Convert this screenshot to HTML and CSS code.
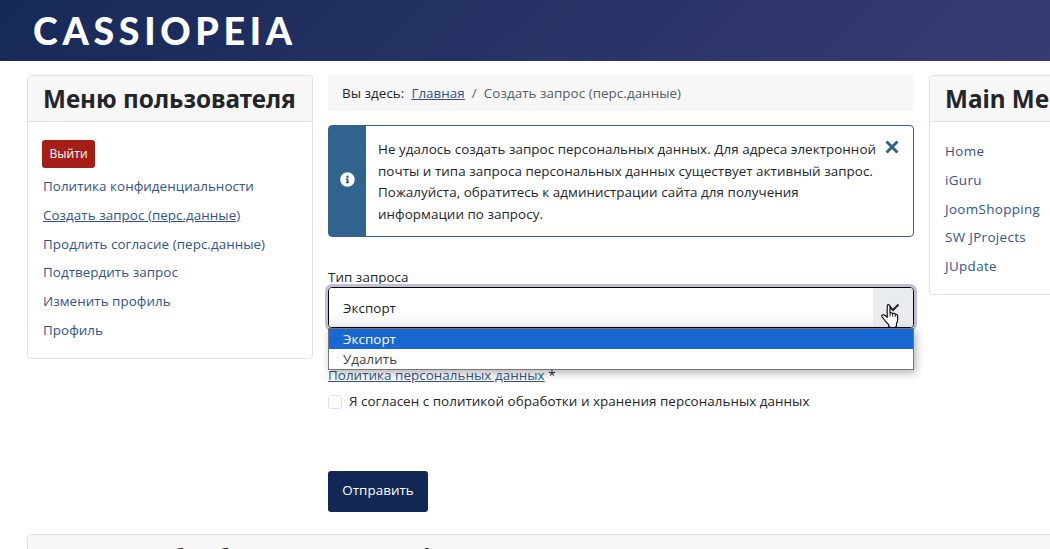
FILE: index.html
```html
<!DOCTYPE html>
<html lang="ru">
<head>
    <meta charset="UTF-8">
    <meta name="viewport" content="width=device-width, initial-scale=1.0">
    <title>Создать запрос (перс.данные)</title>
    <link rel="stylesheet" href="styles.css">
</head>
<body>
    <header class="header">
        <a class="brand" href="#">CASSIOPEIA</a>
    </header>

    <div class="site-grid">
        <aside class="card sidebar-left">
            <h3 class="card-header">Меню пользователя</h3>
            <div class="card-body">
                <button class="btn btn-danger" type="button">Выйти</button>
                <ul class="menu">
                    <li><a href="#">Политика конфиденциальности</a></li>
                    <li class="current"><a href="#">Создать запрос (перс.данные)</a></li>
                    <li><a href="#">Продлить согласие (перс.данные)</a></li>
                    <li><a href="#">Подтвердить запрос</a></li>
                    <li><a href="#">Изменить профиль</a></li>
                    <li><a href="#">Профиль</a></li>
                </ul>
            </div>
        </aside>

        <main class="component">
            <nav class="breadcrumb">
                <span>Вы здесь:</span>
                <a href="#">Главная</a>
                <span class="divider">/</span>
                <span class="active">Создать запрос (перс.данные)</span>
            </nav>

            <div class="alert">
                <div class="alert-icon">
                    <svg width="15" height="15" viewBox="0 0 512 512"><path fill="#fff" d="M256 8C119 8 8 119 8 256s111 248 248 248 248-111 248-248S393 8 256 8zm0 110a42 42 0 1 1 0 84 42 42 0 1 1 0-84zm56 254c0 7-5 12-12 12h-88c-7 0-12-5-12-12v-24c0-7 5-12 12-12h12v-64h-12c-7 0-12-5-12-12v-24c0-7 5-12 12-12h64c7 0 12 5 12 12v100h12c7 0 12 5 12 12z"/></svg>
                </div>
                <div class="alert-text">
                    Не удалось создать запрос персональных данных. Для адреса электронной<br>
                    почты и типа запроса персональных данных существует активный запрос.<br>
                    Пожалуйста, обратитесь к администрации сайта для получения<br>
                    информации по запросу.
                </div>
                <button class="alert-close" type="button" aria-label="Закрыть">
                    <svg width="14" height="14" viewBox="0 0 14 14"><path d="M1.500 1.500l11 11M12.500 1.500l-11 11" stroke="#30638d" stroke-width="3"/></svg>
                </button>
            </div>

            <form class="request-form">
                <label class="form-label">Тип запроса</label>
                <div class="select">
                    <span class="select-value">Экспорт</span>
                    <span class="select-toggle">
                        <svg width="14" height="9" viewBox="0 0 14 9"><path d="M1.500 1.500L7 7l5.500-5.500" fill="none" stroke="#212529" stroke-width="2"/></svg>
                        <svg class="pointer" width="19" height="25" viewBox="0 0 19 25"><path d="M6.200 2.500c0-1 .6-1.700 1.400-1.700s1.400.7 1.400 1.700v6.800c.2-.8 2.400-.9 2.700.5.4-.8 2.400-.7 2.600.7.7-.5 2.400-.2 2.400 1.500v3.600c0 2-.6 3.100-1.300 4.200v2.600c-1.200 1.500-6 1.600-7.700 0v-1.700C6 19 4.300 17.500 3.200 15.500L1 12.800c-.7-1 .2-2.200 1.500-2 1.500.2 2.600 1.300 3.700 2.500z" fill="#fff" stroke="#000" stroke-width="1.100" stroke-linejoin="round"/><path d="M9 9.500v3M11.700 10v2.800M14.300 10.800v2" stroke="#000" stroke-width=".9"/></svg>
                    </span>
                    <ul class="options">
                        <li class="selected">Экспорт</li>
                        <li>Удалить</li>
                    </ul>
                </div>
                <p class="policy"><a href="#">Политика персональных данных</a> *</p>
                <label class="consent">
                    <span class="checkbox"></span>
                    <span>Я согласен с политикой обработки и хранения персональных данных</span>
                </label>
                <button class="btn btn-primary" type="button">Отправить</button>
            </form>
        </main>

        <aside class="card sidebar-right">
            <h3 class="card-header">Main Menu</h3>
            <div class="card-body">
                <ul class="menu">
                    <li><a href="#">Home</a></li>
                    <li><a href="#">iGuru</a></li>
                    <li><a href="#">JoomShopping</a></li>
                    <li><a href="#">SW JProjects</a></li>
                    <li><a href="#">JUpdate</a></li>
                </ul>
            </div>
        </aside>

        <section class="card bottom">
            <h3 class="card-header">Система обработки запросов форума</h3>
        </section>
    </div>
</body>
</html>
```
FILE: styles.css
```css
* {
    box-sizing: border-box;
}

html,
body {
    height: 100%;
    overflow: hidden;
}

body {
    margin: 0;
    background-color: #fff;
    color: #22262a;
    font-family: "Open Sans", "Noto Sans", sans-serif;
    font-size: 13.4px;
    letter-spacing: 0.05px;
    line-height: 21.6px;
}

a {
    color: #30538f;
}

ul {
    list-style: none;
    margin: 0;
    padding: 0;
}

button {
    font: inherit;
    letter-spacing: inherit;
}

.header {
    height: 61px;
    padding: 0 33px;
    display: flex;
    align-items: center;
    background-image: linear-gradient(135deg, #152a58 0%, #393b73 100%);
}

.brand {
    color: #fff;
    font-family: Lato, sans-serif;
    font-size: 37.5px;
    font-weight: 900;
    letter-spacing: 4.7px;
    text-decoration: none;
    line-height: 62px;
}

.site-grid {
    display: grid;
    grid-template-columns: 286px 586px 286px;
    grid-template-rows: 459px auto;
    column-gap: 15px;
    align-items: start;
    width: 1188px;
    margin-left: 27px;
    padding-top: 14px;
}

.card {
    border: 1px solid #dfe3e7;
    border-radius: 4px;
}

.card-header {
    margin: 0;
    height: 46px;
    padding: 0 15px;
    border-bottom: 1px solid #dfe3e7;
    border-radius: 3px 3px 0 0;
    background-color: #f7f7f7;
    font-family: "Noto Sans", sans-serif;
    font-size: 24.3px;
    font-weight: 700;
    letter-spacing: 0;
    line-height: 46px;
    white-space: nowrap;
}

.card-body {
    padding: 18px 14px 16px;
}

.menu {
    padding: 1px 0 0 1px;
}

.menu li {
    height: 28.8px;
    padding-top: 7px;
    white-space: nowrap;
}

.menu a {
    text-decoration: none;
}

.menu .current a {
    text-decoration: underline;
}

.btn {
    display: block;
    padding: 0;
    border: 0;
    border-radius: 3px;
    color: #fff;
}

.btn-danger {
    width: 53px;
    height: 28px;
    background-color: #a51f18;
    font-size: 12px;
}

.btn-primary {
    width: 100px;
    height: 41px;
    margin-top: 58px;
    background-color: #112855;
}

.sidebar-right .card-body {
    padding-top: 11px;
}

.sidebar-right .menu {
    letter-spacing: 0.35px;
}

.bottom {
    grid-column: 1 / -1;
}

.breadcrumb {
    display: flex;
    height: 36px;
    padding: 0 14px;
    background-color: #f7f7f7;
    line-height: 36px;
}

.breadcrumb a {
    margin-left: 7px;
}

.breadcrumb .divider {
    margin: 0 7px;
    color: #5c636a;
}

.breadcrumb .active {
    color: #565d64;
}

.alert {
    display: flex;
    height: 112px;
    margin-top: 14px;
    border: 1px solid #30638d;
    border-radius: 4px;
    background-color: #fff;
}

.alert-icon {
    display: flex;
    flex-shrink: 0;
    align-items: center;
    justify-content: center;
    width: 37px;
    padding-bottom: 4px;
    background-color: #30638d;
}

.alert-text {
    flex: 1;
    min-width: 0;
    padding: 13px 0 0 12px;
    white-space: nowrap;
}

.alert-close {
    align-self: flex-start;
    display: flex;
    margin: 14px 14px 0 0;
    padding: 0;
    border: 0;
    background: none;
}

.request-form {
    margin-top: 30px;
}

.form-label {
    display: block;
    height: 20px;
}

.select {
    position: relative;
    display: flex;
    height: 41px;
    border: 1px solid #000;
    border-radius: 4px;
    box-shadow: 0 0 0 3px #c2bdd6;
    line-height: 40px;
}

.select-value {
    flex: 1;
    padding-left: 14px;
    background-image: linear-gradient(#fff 65%, #f1f1f1);
    border-radius: 3px 0 0 3px;
}

.select-toggle {
    position: relative;
    display: flex;
    align-items: center;
    justify-content: center;
    width: 40px;
    background-color: #e9ecef;
    border-radius: 0 3px 3px 0;
}

.pointer {
    position: absolute;
    top: 16px;
    left: 8px;
    z-index: 2;
}

.options {
    position: absolute;
    top: 40px;
    left: -1px;
    right: -1px;
    z-index: 1;
    border: 1px solid #767676;
    background-color: #fff;
    box-shadow: 2px 3px 8px rgba(0, 0, 0, 0.3);
    color: #3b4045;
    line-height: 20px;
}

.options li {
    height: 20px;
    padding-left: 14px;
}

.options .selected {
    background-color: #1967d2;
    color: #fff;
}

.policy {
    margin: 37px 0 0;
}

.consent {
    display: flex;
    align-items: center;
    height: 22px;
    margin-top: 4px;
    white-space: nowrap;
}

.checkbox {
    width: 14px;
    height: 14px;
    margin-right: 7px;
    border: 1px solid #dfe3e7;
    border-radius: 3px;
}
```
